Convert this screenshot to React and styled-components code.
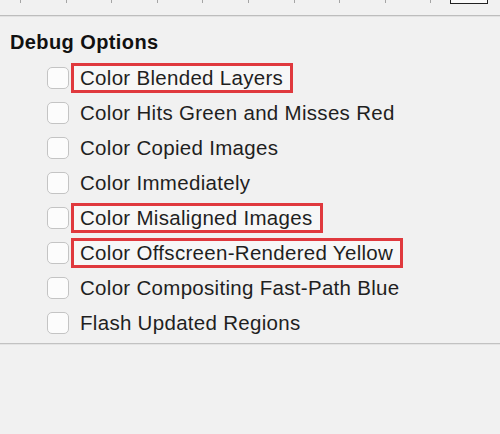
import React from "react";
import styled, { createGlobalStyle } from "styled-components";

const GlobalStyle = createGlobalStyle`
    html, body {
        margin: 0;
        padding: 0;
        background: #f1f1f1;
    }
    body {
        font-family: "Liberation Sans", Arial, sans-serif;
        color: #1f1f1f;
    }
`;

const Panel = styled.div`
    width: 500px;
    height: 434px;
    background: #f1f1f1;
    overflow: hidden;
`;

const Ruler = styled.div`
    position: relative;
    height: 15px;
    border-bottom: 1px solid #bdbdbd;
    box-shadow: 0 1px 0 #e2e2e2;
    display: flex;
    padding-left: 20px;
`;

const Tick = styled.span`
    width: 44.6px;
    flex-shrink: 0;
    height: 3px;
    border-left: 1px solid #a5a5a5;
`;

const Swatch = styled.span`
    position: absolute;
    top: -2px;
    left: 450px;
    width: 36px;
    height: 5px;
    border: 1.5px solid #222;
    border-top: none;
    background: #fafafa;
`;

const Section = styled.section`
    padding: 15px 0 0 10px;
    border-bottom: 1px solid #c2c2c2;
    box-shadow: 0 1px 0 #e4e4e4;
`;

const Heading = styled.h2`
    margin: 0;
    font-size: 20px;
    font-weight: bold;
    line-height: 22px;
    letter-spacing: 0.4px;
    color: #111;
`;

const List = styled.ul`
    list-style: none;
    margin: 7px 0 0;
    padding: 0 0 3px 37px;
`;

const Row = styled.li`
    height: 35px;
    display: flex;
    align-items: center;
`;

const Check = styled.span`
    width: 20px;
    height: 20px;
    border: 1px solid #c4c4c4;
    border-radius: 5px;
    background: #fcfcfc;
    margin-right: 11px;
    flex-shrink: 0;
`;

const Label = styled.span`
    font-size: 20.5px;
    line-height: 24px;
    letter-spacing: 0.3px;
    ${(p) =>
        p.$marked &&
        `
        border: 3px solid #e0393e;
        padding: 0 7px 0 6px;
        margin-left: -9px;
        background: #f7f7f7;
    `}
`;

const options = [
    { text: "Color Blended Layers", marked: true },
    { text: "Color Hits Green and Misses Red" },
    { text: "Color Copied Images" },
    { text: "Color Immediately" },
    { text: "Color Misaligned Images", marked: true },
    { text: "Color Offscreen-Rendered Yellow", marked: true },
    { text: "Color Compositing Fast-Path Blue" },
    { text: "Flash Updated Regions" },
];

const App = () => {
    return (
        <Panel>
            <GlobalStyle />
            <Ruler>
                {Array.from({ length: 10 }).map((_, i) => (
                    <Tick key={i} />
                ))}
                <Swatch />
            </Ruler>
            <Section>
                <Heading>Debug Options</Heading>
                <List>
                    {options.map((o) => (
                        <Row key={o.text}>
                            <Check />
                            <Label $marked={o.marked}>{o.text}</Label>
                        </Row>
                    ))}
                </List>
            </Section>
        </Panel>
    );
};

export default App;
